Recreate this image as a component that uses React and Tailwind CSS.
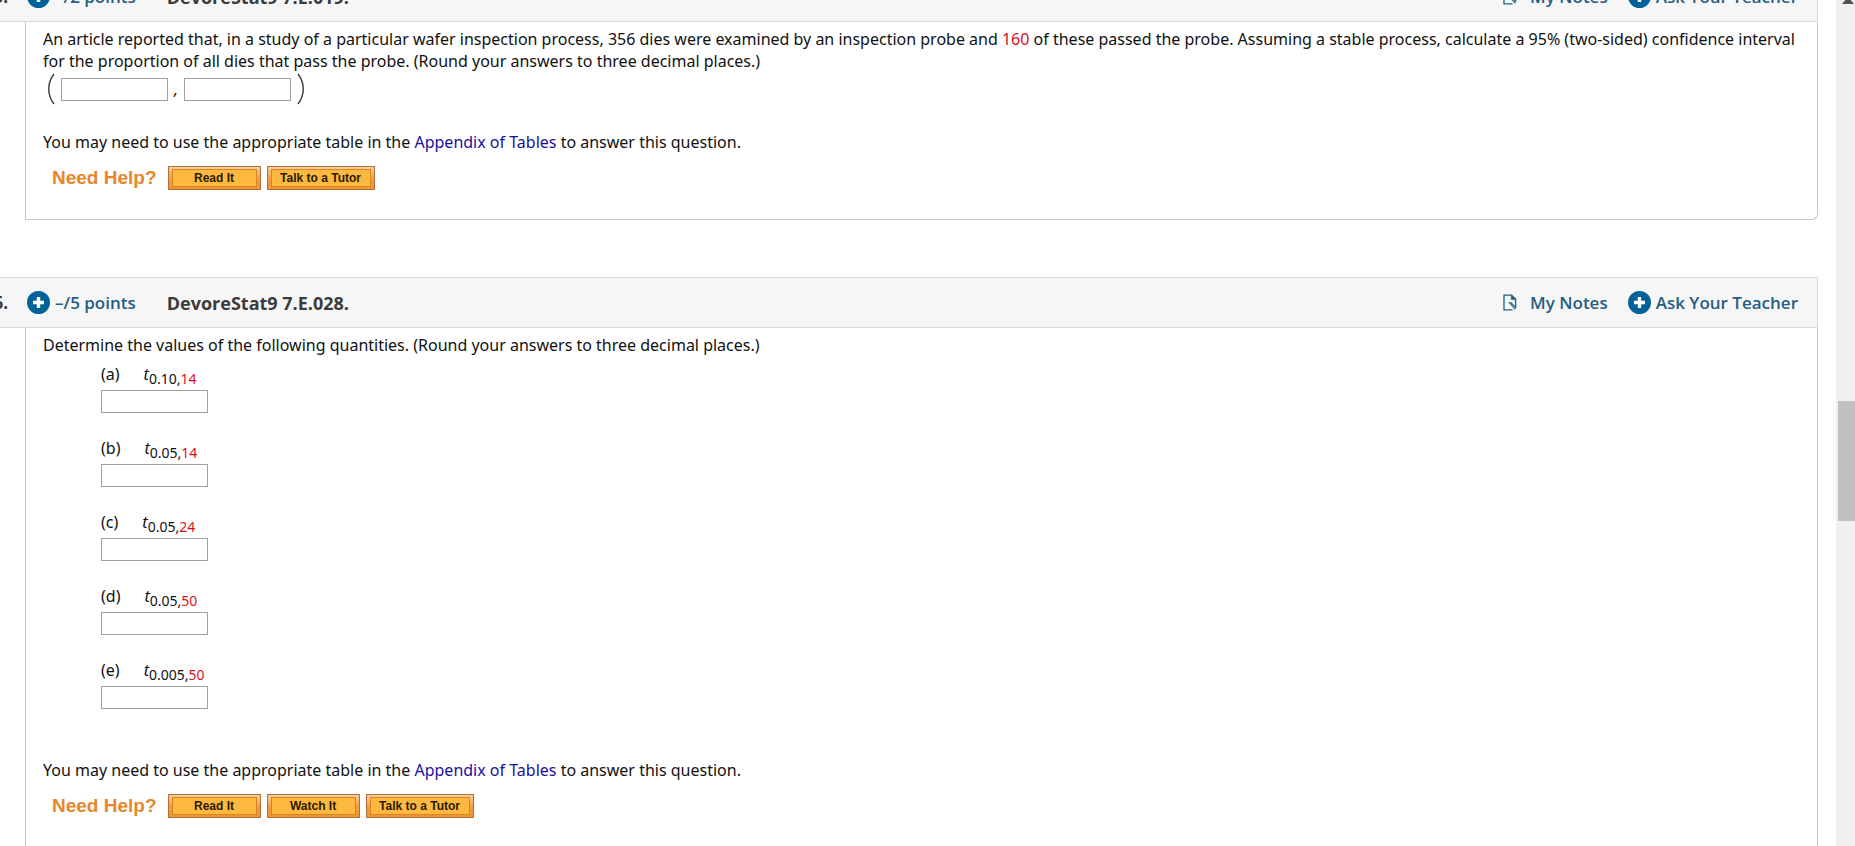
const quantities = [
  { part: 'a', alpha: '0.10', df: '14' },
  { part: 'b', alpha: '0.05', df: '14' },
  { part: 'c', alpha: '0.05', df: '24' },
  { part: 'd', alpha: '0.05', df: '50' },
  { part: 'e', alpha: '0.005', df: '50' },
];

function PlusIcon() {
  return (
    <svg width="23" height="23" viewBox="0 0 23 23" aria-hidden="true" className="shrink-0">
      <circle cx="11.5" cy="11.5" r="11.5" fill="#006298" />
      <path d="M11.5 6v11M6 11.5h11" stroke="#fff" strokeWidth="3.4" />
    </svg>
  );
}

function NotesIcon() {
  return (
    <svg width="14" height="17" viewBox="0 0 14 17" fill="none" stroke="#1f6189" aria-hidden="true" className="shrink-0">
      <path d="M9.5 15.9H1V1.1H8.5L12.6 5V13" strokeWidth="1.3" />
      <path d="M8.2 1v4.5h4.6z" fill="#1f6189" strokeWidth="0.6" />
      <path d="M5.6 8l6.8 7.4M7.4 8.2l5.8 5.6" strokeWidth="1.1" />
    </svg>
  );
}

function QuestionHeader({ number, points, title }) {
  return (
    <header className="flex h-[51px] items-center border border-[#d8d8d8] bg-[#f6f6f6] pr-[19px] font-['Open_Sans',sans-serif] text-[17px] leading-6 font-semibold text-[#255d83]">
      <span className="w-[31px] text-right font-bold text-[#3c3c3c]">{number}.</span>
      <button type="button" className="ml-[19px] flex items-center gap-[5px]">
        <PlusIcon />
        {points} points
      </button>
      <h2 className="ml-[31px] text-lg leading-6 font-bold text-[#3c3c3c]">{title}</h2>
      <div className="ml-auto flex items-center gap-5">
        <a href="#notes" className="flex items-center gap-[13px]">
          <NotesIcon />
          My Notes
        </a>
        <a href="#ask" className="flex items-center gap-[5px]">
          <PlusIcon />
          Ask Your Teacher
        </a>
      </div>
    </header>
  );
}

function AnswerBox(props) {
  return <input type="text" className="block h-[23px] w-[107px] border border-[#a0a0a0] bg-white px-1 text-sm" {...props} />;
}

function HelpButton({ children, wide }) {
  return (
    <button
      type="button"
      className={`${wide ? 'w-[108px]' : 'w-[93px]'} h-6 border border-[#b0703a] bg-linear-to-b from-[#f9cf9c] via-[#f0a045] to-[#ee9330] px-[3px] py-[2px]`}
    >
      <span className="block h-[18px] border border-[#d98523] bg-[#fdb93f] text-center font-['Liberation_Sans',Arial,sans-serif] text-xs leading-4 font-bold text-[#2b1a00]">
        {children}
      </span>
    </button>
  );
}

function NeedHelp({ watch }) {
  return (
    <>
      <p>
        You may need to use the appropriate table in the{' '}
        <a href="#tables" className="text-[#1a0f9c]">Appendix of Tables</a> to answer this question.
      </p>
      <div className="mt-[13px] ml-[9px] flex items-center gap-[6px]">
        <span className="mr-[5px] font-['Liberation_Sans',Arial,sans-serif] text-[19px] leading-6 font-bold text-[#e8862c]">
          Need Help?
        </span>
        <HelpButton>Read It</HelpButton>
        {watch && <HelpButton>Watch It</HelpButton>}
        <HelpButton wide>Talk to a Tutor</HelpButton>
      </div>
    </>
  );
}

function Paren({ right }) {
  return (
    <svg width="8" height="32" viewBox="0 0 8 32" fill="none" stroke="#444" strokeWidth="1.5" aria-hidden="true">
      <path d={right ? 'M1 1C8 10 8 22 1 31' : 'M7 1C0 10 0 22 7 31'} />
    </svg>
  );
}

const bodyClass =
  "ml-[49px] rounded-br-md border border-t-0 border-[#c8c8c8] pt-[6px] pr-4 pl-[17px] font-['Noto_Sans',Verdana,sans-serif] text-base leading-[22px] text-[#111]";

export default function App() {
  return (
    <div className="flex h-screen overflow-hidden bg-white">
      {/* page scrolled part way down, so the first header is cut off */}
      <main className="-mt-[29px] -ml-6 mr-[18px] min-w-0 flex-1">
        <section>
          <QuestionHeader number="5" points="–/2" title="DevoreStat9 7.E.019." />
          <div className={`${bodyClass} pb-[29px]`}>
            <p>
              An article reported that, in a study of a particular wafer inspection process, 356 dies were examined by an
              inspection probe and <span className="text-[#d8121c]">160</span> of these passed the probe. Assuming a stable
              process, calculate a 95% (two-sided) confidence interval for the proportion of all dies that pass the probe.
              (Round your answers to three decimal places.)
            </p>
            <div className="mt-px mb-[26px] ml-1 flex h-8 items-center gap-[6px]">
              <Paren />
              <AnswerBox aria-label="Lower limit" />
              <i>,</i>
              <AnswerBox aria-label="Upper limit" />
              <Paren right />
            </div>
            <NeedHelp />
          </div>
        </section>

        <section className="mt-[57px]">
          <QuestionHeader number="6" points="–/5" title="DevoreStat9 7.E.028." />
          <div className={`${bodyClass} pb-10`}>
            <p>Determine the values of the following quantities. (Round your answers to three decimal places.)</p>
            <div className="mt-[7px] mb-[50px] ml-[58px] flex flex-col gap-6">
              {quantities.map(({ part, alpha, df }) => (
                <div key={part}>
                  <label htmlFor={`t-${part}`} className="mb-[5px] flex gap-6">
                    <span>({part})</span>
                    <span>
                      <i>t</i>
                      <sub className="text-sm">
                        {alpha},<span className="text-[#d8121c]">{df}</span>
                      </sub>
                    </span>
                  </label>
                  <AnswerBox id={`t-${part}`} />
                </div>
              ))}
            </div>
            <NeedHelp watch />
          </div>
        </section>
      </main>

      {/* scrollbar */}
      <div className="flex w-[19px] shrink-0 flex-col bg-[#f0f0f0] pl-[2px]" aria-hidden="true">
        <svg viewBox="0 0 17 20" className="h-5 w-[17px]" fill="#505050">
          <path d="M4 4L10 -3L16 4z" />
        </svg>
        <div className="mt-[381px] h-[120px] bg-[#c1c1c1]" />
      </div>
    </div>
  );
}
